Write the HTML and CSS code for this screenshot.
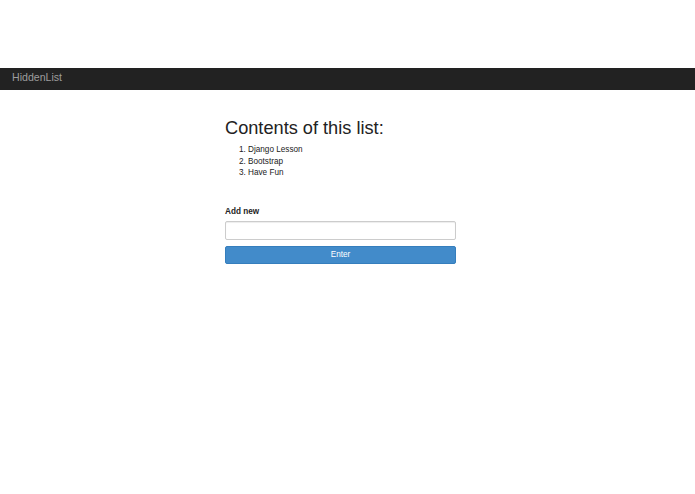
FILE: index.html
```html
<!DOCTYPE html>
<html lang="en">
<head>
<meta charset="utf-8">
<title>HiddenList</title>
<link rel="stylesheet" href="styles.css">
</head>
<body>
<div class="topspace"></div>
<nav class="navbar">
  <a class="brand" href="#">HiddenList</a>
</nav>
<main class="content">
  <h2 class="title">Contents of this list:</h2>
  <ol class="items">
    <li>Django Lesson</li>
    <li>Bootstrap</li>
    <li>Have Fun</li>
  </ol>
  <form class="add-form">
    <label class="label" for="item">Add new</label>
    <input class="field" id="item" type="text">
    <button class="btn" type="button">Enter</button>
  </form>
</main>
</body>
</html>
```
FILE: styles.css
```css
html, body {
  margin: 0;
  padding: 0;
  background: #fff;
}
body {
  font-family: "Liberation Sans", Arial, Helvetica, sans-serif;
  color: #333;
  font-size: 8.2px;
  line-height: 11.5px;
}
.topspace {
  height: 68px;
}
.navbar {
  height: 22px;
  background: #222;
  display: flex;
  align-items: center;
  padding-left: 12px;
}
.brand {
  color: #9d9d9d;
  text-decoration: none;
  font-size: 10.6px;
  line-height: 12px;
  margin-top: -5px;
}
.content {
  width: 231px;
  margin-left: 225px;
  padding-top: 28px;
}
.title {
  margin: 0;
  font-size: 18.2px;
  line-height: 20px;
  font-weight: 500;
  color: #222;
}
.items {
  margin: 6px 0 0;
  padding-left: 23px;
  color: #222;
}
.add-form {
  margin-top: 27.5px;
  display: flex;
  flex-direction: column;
}
.label {
  font-weight: bold;
  color: #222;
}
.field {
  box-sizing: border-box;
  margin: 3px 0 0;
  height: 19px;
  width: 100%;
  border: 1px solid #ccc;
  border-radius: 2px;
  box-shadow: inset 0 1px 1px rgba(0,0,0,0.075);
  padding: 0 6px;
  font: inherit;
}
.btn {
  box-sizing: border-box;
  margin-top: 6px;
  height: 18px;
  width: 100%;
  background: #428bca;
  border: 1px solid #357ebd;
  border-radius: 2px;
  color: #fff;
  font-family: inherit;
  font-size: 8.2px;
  line-height: 11px;
  padding: 0;
}
```
